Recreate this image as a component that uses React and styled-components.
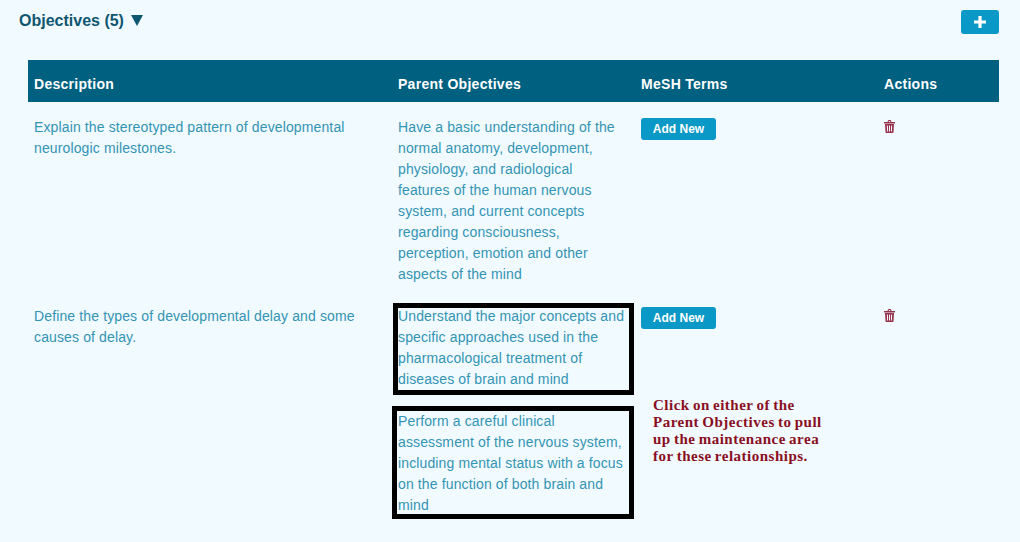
import styled, { createGlobalStyle } from "styled-components"

const Global = createGlobalStyle`
html, body {
  margin: 0;
  padding: 0;
  background: #f0faff;
  font-family: "Liberation Sans", Arial, sans-serif;
}
`;

const Page = styled.div`
width: 1020px;
height: 542px;
overflow: hidden;
background: #f0faff;
`;
const TopBar = styled.div`
display: flex;
justify-content: space-between;
padding: 10px 21px 0 19px;
`;
const Heading = styled.h3`
margin: 0;
font-size: 16px;
line-height: 21px;
font-weight: bold;
color: #0f566f;
display: flex;
gap: 6px;
`;
const Arrow = styled.svg`
display: block;
margin: 5px 0 0 1px;
`;
const PlusButton = styled.button`
width: 38px;
height: 24px;
padding: 0;
border: 0;
border-radius: 3px;
background: #0a98c6;
color: #fff;
display: flex;
align-items: center;
justify-content: center;
`;
const Table = styled.div`
margin: 26px 21px 0 28px;
`;
const Row = styled.div`
display: grid;
grid-template-columns: 364px 243px 243px 121px;
`;
const HeaderRow = styled(Row)`
height: 42px;
padding-top: 6px;
box-sizing: border-box;
align-items: center;
background: #00607f;
`;
const HeaderCell = styled.div`
padding: 0 6px;
font-size: 14px;
font-weight: bold;
letter-spacing: 0.28px;
color: #fff;
`;
const BodyRow = styled(Row)`
padding-top: ${(p) => p.$top}px;
`;
const Cell = styled.div`
position: relative;
padding: 0 8px 0 6px;
font-size: 14px;
line-height: 21px;
letter-spacing: 0.13px;
color: #3494b3;
`;
const ParentItem = styled.div`
position: relative;
margin-bottom: 21px;
`;
const Outline = styled.div`
position: absolute;
top: ${(p) => p.$top}px;
bottom: ${(p) => p.$bottom}px;
left: ${(p) => p.$left}px;
right: -7px;
border: 5px solid #000;
`;
const AddButton = styled.button`
display: block;
width: 75px;
height: 22px;
margin-top: 1px;
padding: 0;
border: 0;
border-radius: 3px;
background: #0a98c6;
color: #fff;
font-family: inherit;
font-size: 12px;
font-weight: bold;
`;
const Trash = styled.svg`
display: block;
margin-top: 3px;
`;
const Note = styled.div`
position: absolute;
top: 91px;
left: 18px;
width: 174px;
font-family: "Liberation Serif", serif;
font-size: 15px;
line-height: 17px;
font-weight: bold;
letter-spacing: 0.5px;
word-spacing: -1px;
color: #8a0f1e;
`;

function TrashIcon() {
    return (
        <Trash width="11" height="13" viewBox="0 0 11 13" fill="#98324c">
            <path fillRule="evenodd" d="M3.5 2 4 .5C4.1.2 4.3 0 4.6 0h1.8c.3 0 .5.2.6.5L7.5 2H11v1.4H0V2zm1.1 0h1.8l-.3-.9H4.9z" />
            <path fillRule="evenodd" d="M1 4h9l-.5 8.2c0 .5-.4.8-.8.8H2.3c-.4 0-.8-.3-.8-.8zm1.9 1.5.2 6h1l-.2-6zm2.1 0v6h1v-6zm2.1 0-.2 6h1l.2-6z" />
        </Trash>
    )
}

export default function App() {
    return (
        <Page>
            <Global />
            <TopBar>
                <Heading>
                    Objectives (5)
                    <Arrow width="12" height="11" viewBox="0 0 12 11" fill="#0f566f">
                        <path d="M0 0h12L6 11z" />
                    </Arrow>
                </Heading>
                <PlusButton aria-label="Add">
                    <svg width="12" height="12" viewBox="0 0 12 12" fill="#fff">
                        <path d="M4.4 0h3.2v4.4H12v3.2H7.6V12H4.4V7.6H0V4.4h4.4z" />
                    </svg>
                </PlusButton>
            </TopBar>
            <Table>
                <HeaderRow>
                    <HeaderCell>Description</HeaderCell>
                    <HeaderCell>Parent Objectives</HeaderCell>
                    <HeaderCell>MeSH Terms</HeaderCell>
                    <HeaderCell>Actions</HeaderCell>
                </HeaderRow>
                <BodyRow $top={15}>
                    <Cell>Explain the stereotyped pattern of developmental neurologic milestones.</Cell>
                    <Cell>
                        <ParentItem>
                            Have a basic understanding of the normal anatomy, development, physiology, and radiological features of the human nervous system, and current concepts regarding consciousness, perception, emotion and other aspects of the mind
                        </ParentItem>
                    </Cell>
                    <Cell><AddButton>Add New</AddButton></Cell>
                    <Cell><TrashIcon /></Cell>
                </BodyRow>
                <BodyRow $top={0}>
                    <Cell>Define the types of developmental delay and some causes of delay.</Cell>
                    <Cell>
                        <ParentItem>
                            Understand the major concepts and specific approaches used in the pharmacological treatment of diseases of brain and mind
                            <Outline $top={-3} $bottom={-5} $left={-5} />
                        </ParentItem>
                        <ParentItem>
                            Perform a careful clinical assessment of the nervous system, including mental status with a focus on the function of both brain and mind
                            <Outline $top={-5} $bottom={-3} $left={-6} />
                        </ParentItem>
                    </Cell>
                    <Cell>
                        <AddButton>Add New</AddButton>
                        <Note>Click on either of the Parent Objectives to pull up the maintenance area for these relationships.</Note>
                    </Cell>
                    <Cell><TrashIcon /></Cell>
                </BodyRow>
            </Table>
        </Page>
    )
}
